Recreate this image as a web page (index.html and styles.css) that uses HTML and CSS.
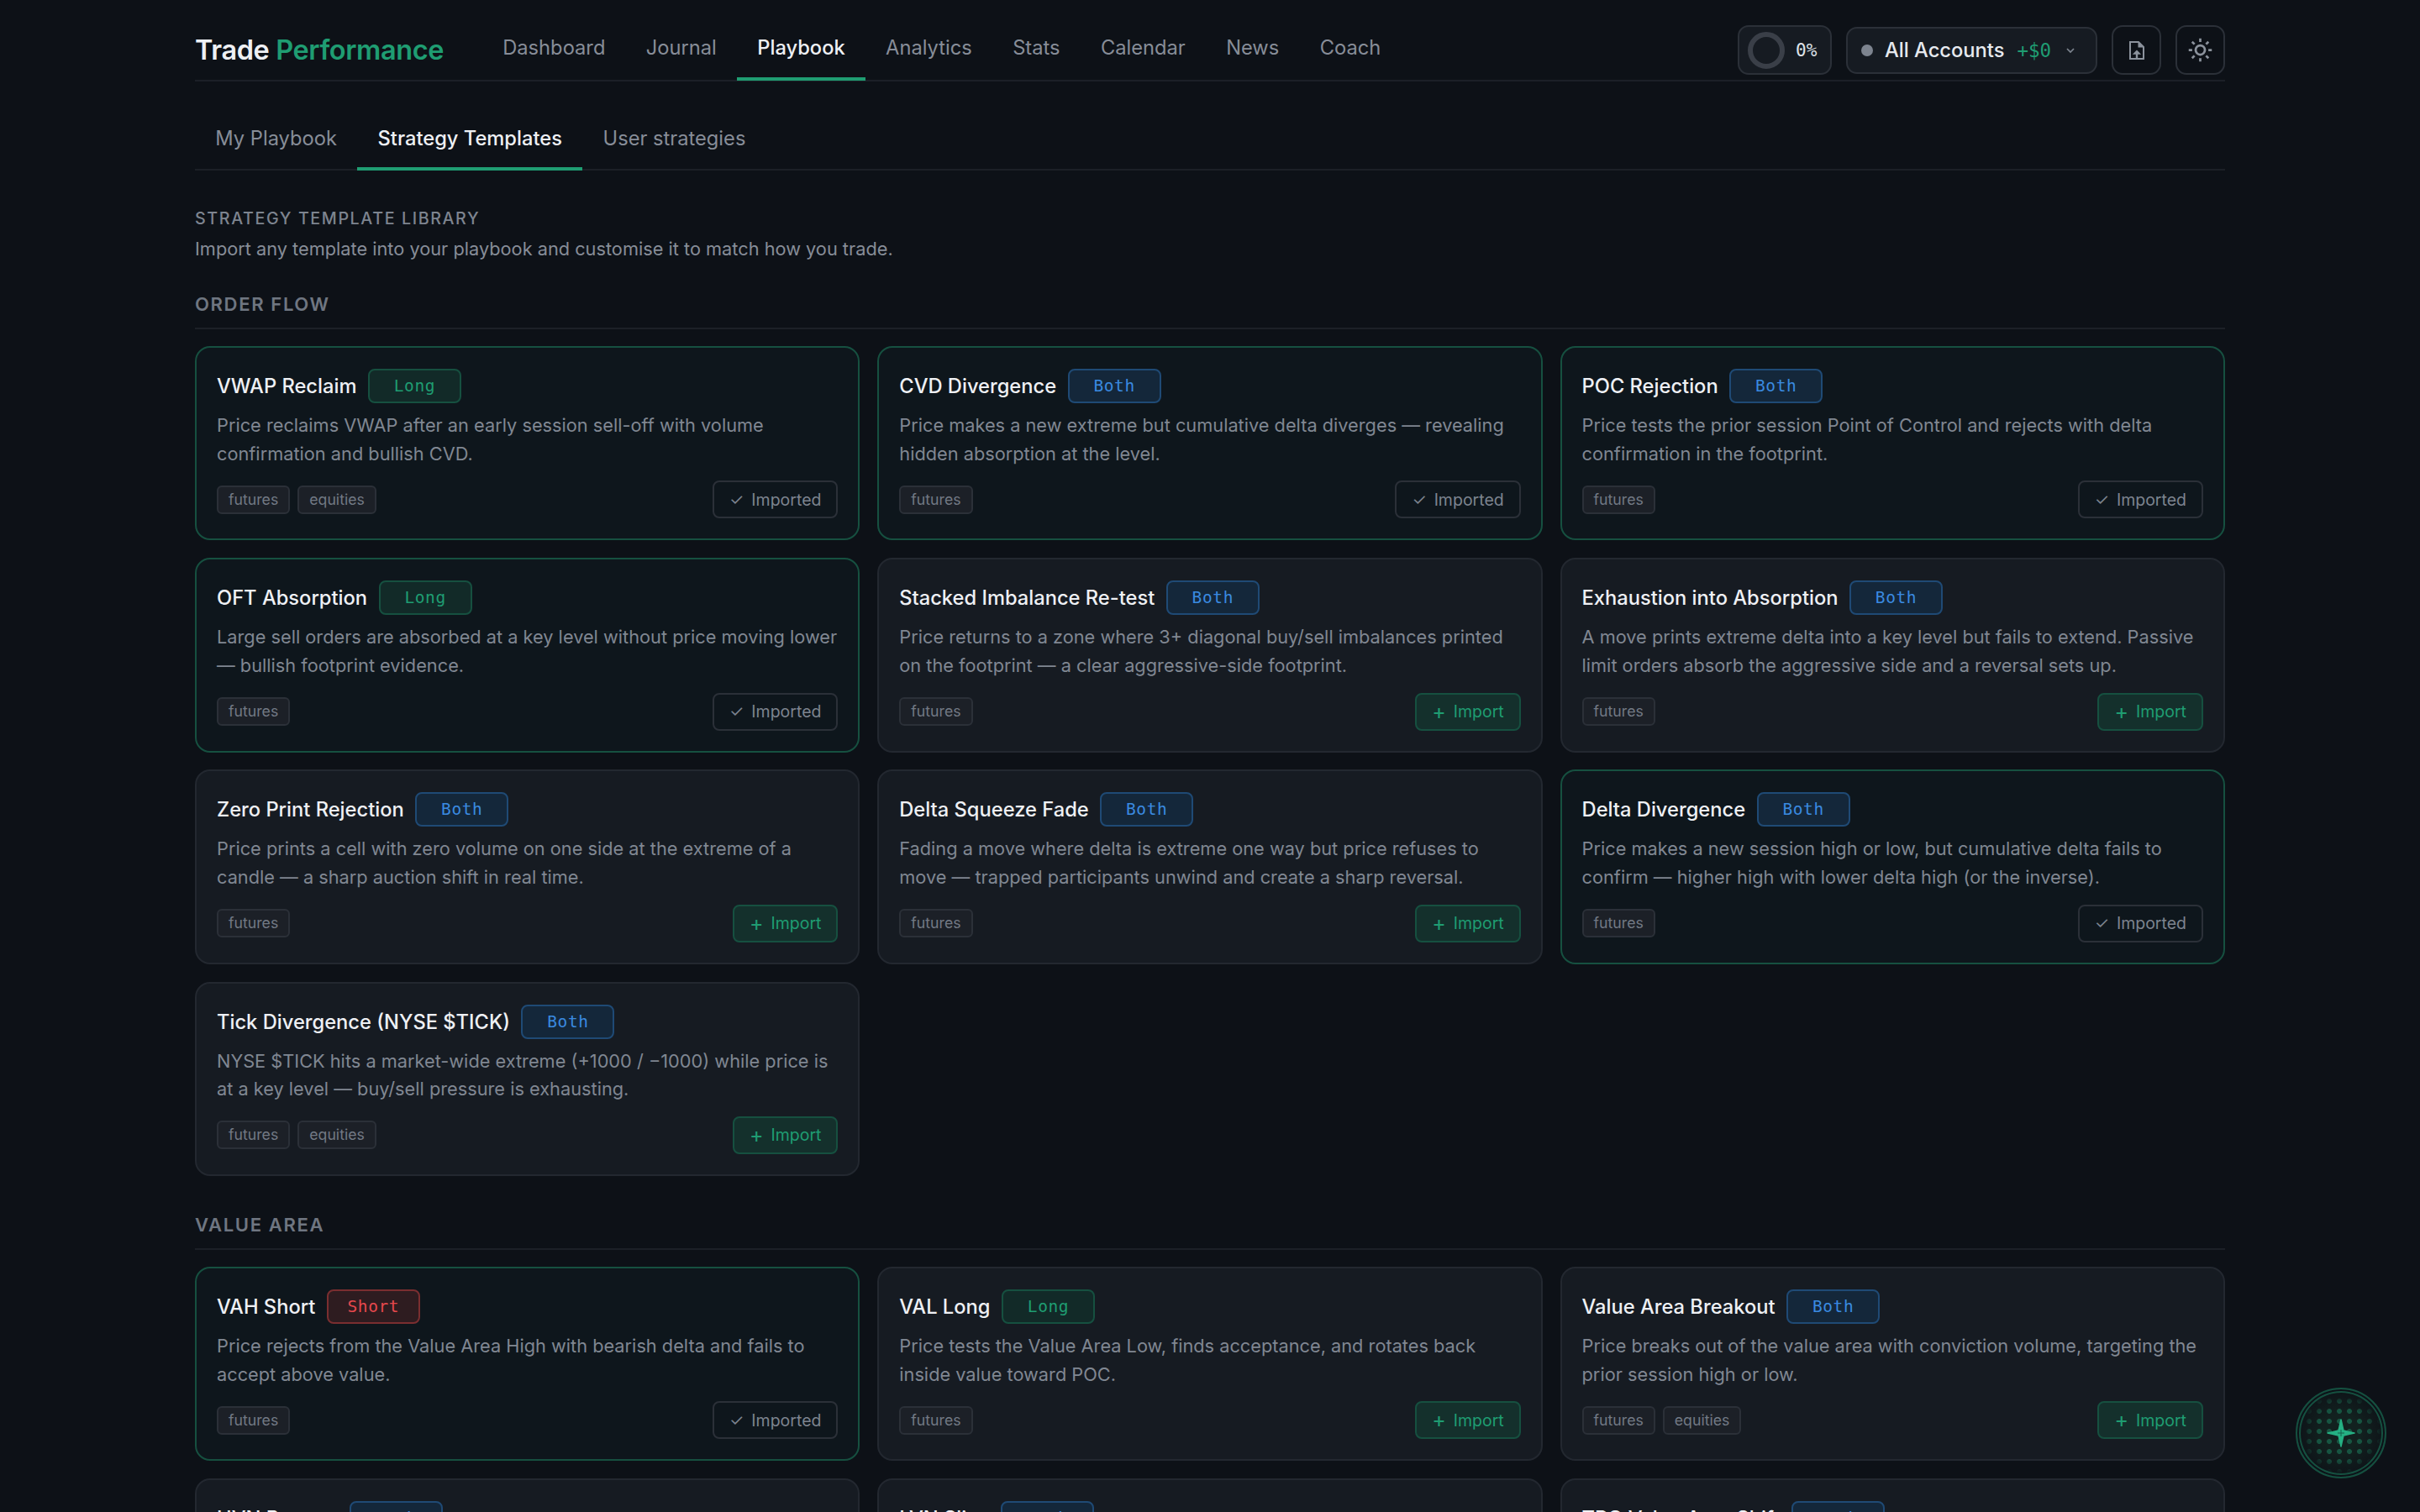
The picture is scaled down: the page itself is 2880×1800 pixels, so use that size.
FILE: index.html
```html
<!DOCTYPE html>
<html lang="en">
<head>
<meta charset="utf-8">
<title>Trade Performance</title>
<link rel="stylesheet" href="styles.css">
</head>
<body>
<div class="page">
  <header class="topbar">
    <div class="logo">Trade <span class="logo-accent">Performance</span></div>
    <nav class="tabs main-tabs">
      <a class="tab">Dashboard</a><a class="tab">Journal</a><a class="tab active">Playbook</a><a class="tab">Analytics</a><a class="tab">Stats</a><a class="tab">Calendar</a><a class="tab">News</a><a class="tab">Coach</a>
    </nav>
    <div class="controls">
      <div class="progress"><span class="ring"></span><span class="pct">0%</span></div>
      <div class="account"><span class="dot"></span><span class="acc-name">All Accounts</span><span class="acc-pnl">+$0</span>
        <svg class="chev" viewBox="0 0 12 12"><path d="M3 4.5 6 7.5 9 4.5"/></svg></div>
      <button class="icon-btn"><svg viewBox="0 0 18 22" class="ico-file"><path d="M1 1h10l6 6v14H1z" fill="none" stroke="#8b929c" stroke-width="2"/><path d="M10.5 1 17 7.5h-6.5z" fill="#8b929c"/><path d="M9 21v-7" fill="none" stroke="#8b929c" stroke-width="2.4"/><path d="M3.8 15.8 9 10.6l5.2 5.2z" fill="#8b929c"/></svg></button>
      <button class="icon-btn"><svg viewBox="0 0 24 24" class="ico-sun"><circle cx="12" cy="12" r="4"/><path d="M12 2v3M12 19v3M2 12h3M19 12h3M4.9 4.9 7 7M17 17l2.1 2.1M4.9 19.1 7 17M17 7l2.1-2.1"/></svg></button>
    </div>
  </header>

  <nav class="tabs sub-tabs">
    <a class="tab">My Playbook</a><a class="tab active">Strategy Templates</a><a class="tab">User strategies</a>
  </nav>

  <div class="intro">
    <div class="eyebrow">STRATEGY TEMPLATE LIBRARY</div>
    <p class="intro-text">Import any template into your playbook and customise it to match how you trade.</p>
  </div>

  <section class="group">
    <h2 class="group-title">ORDER FLOW</h2>
    <div class="grid">
      <article class="card done"><div class="card-head"><h3>VWAP Reclaim</h3><span class="badge long">Long</span></div><p class="desc">Price reclaims VWAP after an early session sell-off with volume confirmation and bullish CVD.</p><div class="card-foot"><div class="tags"><span class="tag">futures</span><span class="tag">equities</span></div><button class="btn imported"><span>✓</span><span>Imported</span></button></div></article>
      <article class="card done"><div class="card-head"><h3>CVD Divergence</h3><span class="badge both">Both</span></div><p class="desc">Price makes a new extreme but cumulative delta diverges — revealing hidden absorption at the level.</p><div class="card-foot"><div class="tags"><span class="tag">futures</span></div><button class="btn imported"><span>✓</span><span>Imported</span></button></div></article>
      <article class="card done"><div class="card-head"><h3>POC Rejection</h3><span class="badge both">Both</span></div><p class="desc">Price tests the prior session Point of Control and rejects with delta confirmation in the footprint.</p><div class="card-foot"><div class="tags"><span class="tag">futures</span></div><button class="btn imported"><span>✓</span><span>Imported</span></button></div></article>
      <article class="card done"><div class="card-head"><h3>OFT Absorption</h3><span class="badge long">Long</span></div><p class="desc">Large sell orders are absorbed at a key level without price moving lower — bullish footprint evidence.</p><div class="card-foot"><div class="tags"><span class="tag">futures</span></div><button class="btn imported"><span>✓</span><span>Imported</span></button></div></article>
      <article class="card"><div class="card-head"><h3>Stacked Imbalance Re-test</h3><span class="badge both">Both</span></div><p class="desc">Price returns to a zone where 3+ diagonal buy/sell imbalances printed on the footprint — a clear aggressive-side footprint.</p><div class="card-foot"><div class="tags"><span class="tag">futures</span></div><button class="btn import"><span class="plus">+</span><span>Import</span></button></div></article>
      <article class="card"><div class="card-head"><h3>Exhaustion into Absorption</h3><span class="badge both">Both</span></div><p class="desc">A move prints extreme delta into a key level but fails to extend. Passive limit orders absorb the aggressive side and a reversal sets up.</p><div class="card-foot"><div class="tags"><span class="tag">futures</span></div><button class="btn import"><span class="plus">+</span><span>Import</span></button></div></article>
      <article class="card"><div class="card-head"><h3>Zero Print Rejection</h3><span class="badge both">Both</span></div><p class="desc">Price prints a cell with zero volume on one side at the extreme of a candle — a sharp auction shift in real time.</p><div class="card-foot"><div class="tags"><span class="tag">futures</span></div><button class="btn import"><span class="plus">+</span><span>Import</span></button></div></article>
      <article class="card"><div class="card-head"><h3>Delta Squeeze Fade</h3><span class="badge both">Both</span></div><p class="desc">Fading a move where delta is extreme one way but price refuses to move — trapped participants unwind and create a sharp reversal.</p><div class="card-foot"><div class="tags"><span class="tag">futures</span></div><button class="btn import"><span class="plus">+</span><span>Import</span></button></div></article>
      <article class="card done"><div class="card-head"><h3>Delta Divergence</h3><span class="badge both">Both</span></div><p class="desc">Price makes a new session high or low, but cumulative delta fails to confirm — higher high with lower delta high (or the inverse).</p><div class="card-foot"><div class="tags"><span class="tag">futures</span></div><button class="btn imported"><span>✓</span><span>Imported</span></button></div></article>
      <article class="card"><div class="card-head"><h3>Tick Divergence (NYSE $TICK)</h3><span class="badge both">Both</span></div><p class="desc">NYSE $TICK hits a market-wide extreme (+1000 / −1000) while price is at a key level — buy/sell pressure is exhausting.</p><div class="card-foot"><div class="tags"><span class="tag">futures</span><span class="tag">equities</span></div><button class="btn import"><span class="plus">+</span><span>Import</span></button></div></article>
    </div>
  </section>

  <section class="group">
    <h2 class="group-title">VALUE AREA</h2>
    <div class="grid">
      <article class="card done"><div class="card-head"><h3>VAH Short</h3><span class="badge short">Short</span></div><p class="desc">Price rejects from the Value Area High with bearish delta and fails to accept above value.</p><div class="card-foot"><div class="tags"><span class="tag">futures</span></div><button class="btn imported"><span>✓</span><span>Imported</span></button></div></article>
      <article class="card"><div class="card-head"><h3>VAL Long</h3><span class="badge long">Long</span></div><p class="desc">Price tests the Value Area Low, finds acceptance, and rotates back inside value toward POC.</p><div class="card-foot"><div class="tags"><span class="tag">futures</span></div><button class="btn import"><span class="plus">+</span><span>Import</span></button></div></article>
      <article class="card"><div class="card-head"><h3>Value Area Breakout</h3><span class="badge both">Both</span></div><p class="desc">Price breaks out of the value area with conviction volume, targeting the prior session high or low.</p><div class="card-foot"><div class="tags"><span class="tag">futures</span><span class="tag">equities</span></div><button class="btn import"><span class="plus">+</span><span>Import</span></button></div></article>
      <article class="card"><div class="card-head"><h3>HVN Bounce</h3><span class="badge both">Both</span></div><p class="desc">Price returns to a high volume node and holds.</p><div class="card-foot"><div class="tags"><span class="tag">futures</span></div><button class="btn import"><span class="plus">+</span><span>Import</span></button></div></article>
      <article class="card"><div class="card-head"><h3>LVN Slice</h3><span class="badge both">Both</span></div><p class="desc">Price slices through a low volume node.</p><div class="card-foot"><div class="tags"><span class="tag">futures</span></div><button class="btn import"><span class="plus">+</span><span>Import</span></button></div></article>
      <article class="card"><div class="card-head"><h3>TPO Value Area Shift</h3><span class="badge both">Both</span></div><p class="desc">The value area shifts across sessions.</p><div class="card-foot"><div class="tags"><span class="tag">futures</span></div><button class="btn import"><span class="plus">+</span><span>Import</span></button></div></article>
    </div>
  </section>
</div>

<button class="fab" aria-label="Coach">
  <span class="fab-dots"></span>
  <svg viewBox="0 0 40 40" class="star"><path class="star-body" d="M20 4C21.5 10 22 13 23 17 27 18 31 19 36 20 31 21 27 22 23 23 22 27 21.5 30 20 36 18.5 30 18 27 17 23 13 22 9 21 4 20 9 19 13 18 17 17 18 13 18.5 10 20 4Z"/><path class="star-core" d="M20 16v8M16 20h8"/></svg>
</button>
</body>
</html>
```
FILE: styles.css
```css
* { box-sizing: border-box; }
html, body { margin: 0; height: 100%; overflow: hidden; background: #0d1117; }
body { font-family: Inter, "Liberation Sans", sans-serif; color: #e6e9ee; }
.page { width: 2416px; margin: 0 auto; }

.topbar { display: flex; align-items: center; height: 97px; padding-top: 24px; border-bottom: 2px solid #1c2027; }
.logo { font-size: 32.5px; font-weight: 600; letter-spacing: -0.4px; color: #eef0f4; margin-right: 46px; white-space: nowrap; }
.logo-accent { color: #1f9d72; }

.tabs { display: flex; }
.main-tabs { align-self: flex-end; margin-bottom: -1px; }
.tab { display: block; font-size: 23.7px; line-height: 30px; padding: 24px 24.2px 20px; color: #878d98; border-bottom: 4px solid transparent; white-space: nowrap; }
.tab.active { color: #eef0f4; font-weight: 500; border-bottom-color: #1f9d72; }
.sub-tabs { margin-top: 33px; border-bottom: 2px solid #1c2027; }
.sub-tabs .tab { padding: 19.5px 24.3px 19.5px; margin-bottom: -2px; }

.controls { display: flex; align-items: center; gap: 17px; margin-left: auto; }
.progress { display: flex; align-items: center; gap: 13px; width: 112px; height: 59px; padding-left: 10px; background: #161b22; border: 2px solid #2b3038; border-radius: 13px; }
.ring { width: 44px; height: 44px; border-radius: 50%; border: 6px solid #3a3f48; }
.pct { font-family: "DejaVu Sans Mono", monospace; font-size: 21px; color: #dfe3e9; }
.account { display: flex; align-items: center; width: 299px; height: 56px; padding-left: 16px; background: #161b22; border: 2px solid #2b3038; border-radius: 13px; }
.dot { width: 14px; height: 14px; border-radius: 50%; background: #7d848f; margin-right: 14px; }
.acc-name { font-size: 23.7px; font-weight: 500; color: #e6e9ee; }
.acc-pnl { font-family: "DejaVu Sans Mono", monospace; font-size: 22.5px; color: #1f9d72; margin-left: 15px; }
.chev { width: 16px; height: 16px; margin-left: 15px; fill: none; stroke: #7d848f; stroke-width: 1.3; }
.icon-btn { display: flex; align-items: center; justify-content: center; width: 59px; height: 59px; padding: 0; background: transparent; border: 2px solid #2b3038; border-radius: 13px; }
.ico-file { width: 18px; height: 22px; }
.ico-sun { width: 33px; height: 33px; fill: none; stroke: #8b929c; stroke-width: 2; }

.intro { margin-top: 44px; }
.eyebrow { font-size: 19.7px; line-height: 26px; letter-spacing: 1.6px; font-weight: 500; color: #7d848f; }
.intro-text { margin: 10px 0 0; font-size: 21.75px; line-height: 26px; color: #878d98; }

.group { margin-top: 39px; }
.group + .group { margin-top: 44px; }
.group-title { margin: 0 0 20px; padding-bottom: 14px; font-size: 22.1px; line-height: 28px; font-weight: 600; letter-spacing: 1.6px; color: #6f7681; border-bottom: 2px solid #1c2027; }
.grid { display: grid; grid-template-columns: repeat(3, 1fr); gap: 20.8px; }

.card { height: 231.4px; padding: 25px 24px 24px; background: #161b22; border: 2px solid #232830; border-radius: 18px; display: flex; flex-direction: column; }
.card.done { background: #0e161c; border-color: #165040; }
.card-head { display: flex; align-items: center; gap: 13.5px; height: 41px; }
.card-head h3 { margin: 0; font-size: 23.7px; font-weight: 500; color: #eef0f4; white-space: nowrap; }
.badge { display: flex; align-items: center; justify-content: center; min-width: 111px; height: 41px; padding: 0 22px; border-radius: 8px; border: 2px solid; font-family: "DejaVu Sans Mono", monospace; font-size: 19.5px; letter-spacing: .6px; }
.badge.long { background: #122a28; border-color: #165040; color: #1f9d72; }
.badge.both { background: #14273a; border-color: #1f4a75; color: #3a8ae0; }
.badge.short { background: #2e1c20; border-color: #7a2e30; color: #e5484d; }
.desc { margin: 10px -2px 0 0; font-size: 21.75px; line-height: 33.8px; color: #808792; }
.card-foot { display: flex; align-items: center; justify-content: space-between; margin-top: auto; }
.tags { display: flex; gap: 9px; }
.tag { display: block; height: 34px; line-height: 30px; padding: 0 12px; background: #1c2027; border: 2px solid #2b3038; border-radius: 6px; font-size: 17.7px; color: #727984; }
.btn { display: flex; align-items: center; gap: 9px; height: 45px; border-radius: 8px; border: 2px solid; font-family: inherit; font-size: 19.5px; padding: 0 18px; white-space: nowrap; }
.plus { font-size: 25px; line-height: 1; }
.btn.imported { background: transparent; border-color: #2b3038; color: #7d848f; }
.btn.import { background: #14302c; border-color: #165040; color: #1f9d72; }

.fab { position: fixed; left: 2732px; top: 1652px; width: 108px; height: 108px; padding: 0; border-radius: 50%; border: 2px solid #155040; box-shadow: inset 0 0 0 2px #0d1117, inset 0 0 0 4px #155040; background: radial-gradient(circle, #12211f 30%, #0d1117 78%); display: flex; align-items: center; justify-content: center; }
.fab-dots { position: absolute; inset: 4px; border-radius: 50%; background: radial-gradient(circle, rgba(31,157,114,.42) 0 2.6px, transparent 3.3px) 4px 4px / 12px 12px; -webkit-mask-image: radial-gradient(circle, #000 45%, transparent 72%); mask-image: radial-gradient(circle, #000 45%, transparent 72%); }
.star { position: relative; width: 40px; height: 40px; }
.star-body { fill: #25b083; stroke: #25b083; stroke-width: 1.5; stroke-linejoin: round; }
.star-core { fill: none; stroke: #14604c; stroke-width: 1; }
```
